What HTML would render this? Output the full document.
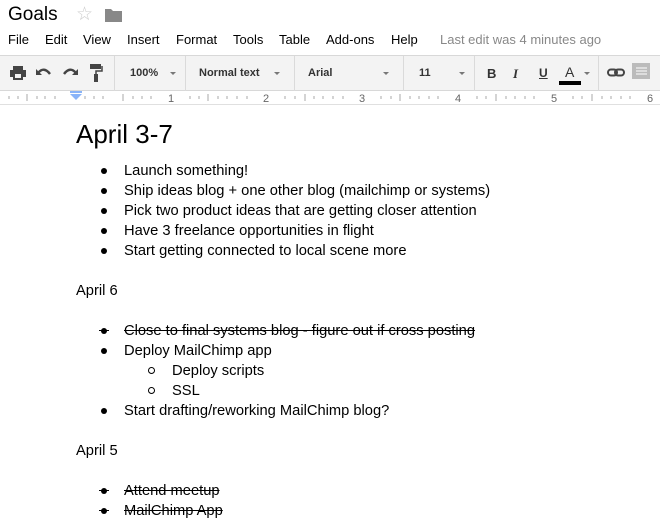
<!DOCTYPE html>
<html><head><style>
*{margin:0;padding:0;box-sizing:border-box}
body{width:660px;height:520px;overflow:hidden;background:#fff;font-family:"Liberation Sans",Arial,sans-serif;position:relative}
.a{position:absolute;white-space:nowrap}
.menu span{position:absolute;top:32px;font-size:13px;color:#000}
.tb{position:absolute;top:55px;left:0;width:660px;height:36px;background:#f3f3f3;border-top:1px solid #d8d8d8;border-bottom:1px solid #d8d8d8}
.sep{position:absolute;top:0;width:1px;height:35px;background:#dadada}
.tb .t{position:absolute;top:11px;font-size:11px;font-weight:bold;color:#333}
.dd{position:absolute;top:16px;width:0;height:0;border-left:3px solid transparent;border-right:3px solid transparent;border-top:3px solid #777}
.ruler{position:absolute;top:91px;left:0;width:660px;height:14px;background:#fff;border-bottom:1px solid #e0e0e0}
.l{position:absolute;font-size:14.7px;line-height:20px;white-space:nowrap}
.b{position:absolute;width:6px;height:6px;border-radius:50%;background:#000}
.c{position:absolute;width:7px;height:7px;border-radius:50%;border:1px solid #000}
s{text-decoration:line-through}
</style></head><body>
<div class="a" style="left:8px;top:4px;font-size:19px;color:#000">Goals</div>
<div class="a" style="left:76px;top:3px;font-size:19px;color:#ccc">☆</div>
<svg class="a" style="left:105px;top:8px" width="17" height="14"><path d="M0 1h6l2 2h9v11H0z" fill="#888"/></svg>
<div class="menu">
<span style="left:8px">File</span><span style="left:45px">Edit</span><span style="left:83px">View</span><span style="left:127px">Insert</span><span style="left:176px">Format</span><span style="left:233px">Tools</span><span style="left:279px">Table</span><span style="left:326px">Add-ons</span><span style="left:391px">Help</span><span style="left:440px;color:#888">Last edit was 4 minutes ago</span>
</div>
<div class="tb">
<svg class="a" style="left:10px;top:10px" width="16" height="14"><path d="M3 0h10v4H3z M0 4h16v7h-3v3H3v-3H0z" fill="#444"/><rect x="5" y="8" width="6" height="4" fill="#f3f3f3"/></svg>
<svg class="a" style="left:36px;top:11px" width="16" height="10"><path d="M2 6 Q8 -1 14 7" stroke="#444" stroke-width="2.4" fill="none"/><path d="M0 2v6h6z" fill="#444"/></svg>
<svg class="a" style="left:62px;top:11px" width="16" height="10"><path d="M14 6 Q8 -1 2 7" stroke="#444" stroke-width="2.4" fill="none"/><path d="M16 2v6h-6z" fill="#444"/></svg>
<svg class="a" style="left:89px;top:8px" width="16" height="18"><path d="M1 0h11v5H1z" fill="#444"/><path d="M13 2v5H7v3" stroke="#444" stroke-width="1.5" fill="none"/><rect x="5" y="10" width="4" height="8" fill="#444"/></svg>
<div class="sep" style="left:114px"></div>
<div class="t" style="left:130px">100%</div><div class="dd" style="left:170px"></div>
<div class="sep" style="left:185px"></div>
<div class="t" style="left:199px">Normal text</div><div class="dd" style="left:274px"></div>
<div class="sep" style="left:294px"></div>
<div class="t" style="left:308px">Arial</div><div class="dd" style="left:383px"></div>
<div class="sep" style="left:403px"></div>
<div class="t" style="left:419px">11</div><div class="dd" style="left:459px"></div>
<div class="sep" style="left:474px"></div>
<div class="t" style="left:487px;font-size:13px;top:10px">B</div>
<div class="t" style="left:513px;font-size:13px;top:10px;font-style:italic;font-family:'Liberation Serif',serif">I</div>
<div class="t" style="left:539px;font-size:12px;top:10px;text-decoration:underline">U</div>
<div class="t" style="left:565px;font-size:14px;top:8px;font-weight:normal">A</div>
<div class="a" style="left:559px;top:25px;width:22px;height:4px;background:#000"></div>
<div class="dd" style="left:584px"></div>
<div class="sep" style="left:598px"></div>
<svg class="a" style="left:607px;top:12px" width="18" height="10"><rect x="1" y="1.5" width="9" height="6" rx="3" stroke="#444" stroke-width="2" fill="none"/><rect x="8" y="1.5" width="9" height="6" rx="3" stroke="#444" stroke-width="2" fill="none"/></svg>
<svg class="a" style="left:632px;top:7px" width="18" height="16"><path d="M0 0h18v16H0z" fill="#bbb"/><path d="M4 5h11M4 8h11M4 11h11" stroke="#fff" stroke-width="1"/></svg>
</div>
<div class="ruler">
<svg width="660" height="14" style="position:absolute;left:0;top:0">
<g stroke="#aaa" stroke-width="1">
<path d="M9 5v3M18 5v3M27 3v7M37 5v3M45 5v3M55 5v3M85 5v3M94 5v3M103 5v3M123 3v7M133 5v3M142 5v3M151 5v3M190 5v3M199 5v3M208 3v7M218 5v3M227 5v3M237 5v3M247 5v3M285 5v3M295 5v3M305 3v7M314 5v3M323 5v3M333 5v3M343 5v3M381 5v3M391 5v3M400 3v7M410 5v3M419 5v3M429 5v3M438 5v3M477 5v3M486 5v3M496 3v7M506 5v3M515 5v3M525 5v3M534 5v3M573 5v3M582 5v3M592 3v7M602 5v3M611 5v3M621 5v3M630 5v3"/>
</g>
<g fill="#666" font-size="11" font-family="Liberation Sans"><text x="168" y="11">1</text><text x="263" y="11">2</text><text x="359" y="11">3</text><text x="455" y="11">4</text><text x="551" y="11">5</text><text x="647" y="11">6</text></g>
<path d="M70 3h12l-6 6z" fill="#8ab4f8"/><rect x="70" y="0" width="12" height="2" fill="#8ab4f8"/>
</svg>
</div>
<div class="a" style="left:76px;top:117px;font-size:26px;line-height:34px">April 3-7</div>
<div class="b" style="left:101px;top:168px"></div><div class="l" style="left:124px;top:161px">Launch something!</div>
<div class="b" style="left:101px;top:188px"></div><div class="l" style="left:124px;top:181px">Ship ideas blog + one other blog (mailchimp or systems)</div>
<div class="b" style="left:101px;top:208px"></div><div class="l" style="left:124px;top:201px">Pick two product ideas that are getting closer attention</div>
<div class="b" style="left:101px;top:228px"></div><div class="l" style="left:124px;top:221px">Have 3 freelance opportunities in flight</div>
<div class="b" style="left:101px;top:248px"></div><div class="l" style="left:124px;top:241px">Start getting connected to local scene more</div>
<div class="l" style="left:76px;top:281px">April 6</div>
<div class="b" style="left:101px;top:328px"></div><div class="l" style="left:124px;top:321px"><s>Close to final systems blog - figure out if cross posting</s></div>
<div class="a" style="left:99px;top:330px;width:10px;height:1px;background:#000"></div>
<div class="b" style="left:101px;top:348px"></div><div class="l" style="left:124px;top:341px">Deploy MailChimp app</div>
<div class="c" style="left:148px;top:367px"></div><div class="l" style="left:172px;top:361px">Deploy scripts</div>
<div class="c" style="left:148px;top:387px"></div><div class="l" style="left:172px;top:381px">SSL</div>
<div class="b" style="left:101px;top:408px"></div><div class="l" style="left:124px;top:401px">Start drafting/reworking MailChimp blog?</div>
<div class="l" style="left:76px;top:441px">April 5</div>
<div class="b" style="left:101px;top:488px"></div><div class="l" style="left:124px;top:481px"><s>Attend meetup</s></div>
<div class="a" style="left:99px;top:490px;width:10px;height:1px;background:#000"></div>
<div class="b" style="left:101px;top:508px"></div><div class="l" style="left:124px;top:501px"><s>MailChimp App</s></div>
<div class="a" style="left:99px;top:510px;width:10px;height:1px;background:#000"></div>
</body></html>
